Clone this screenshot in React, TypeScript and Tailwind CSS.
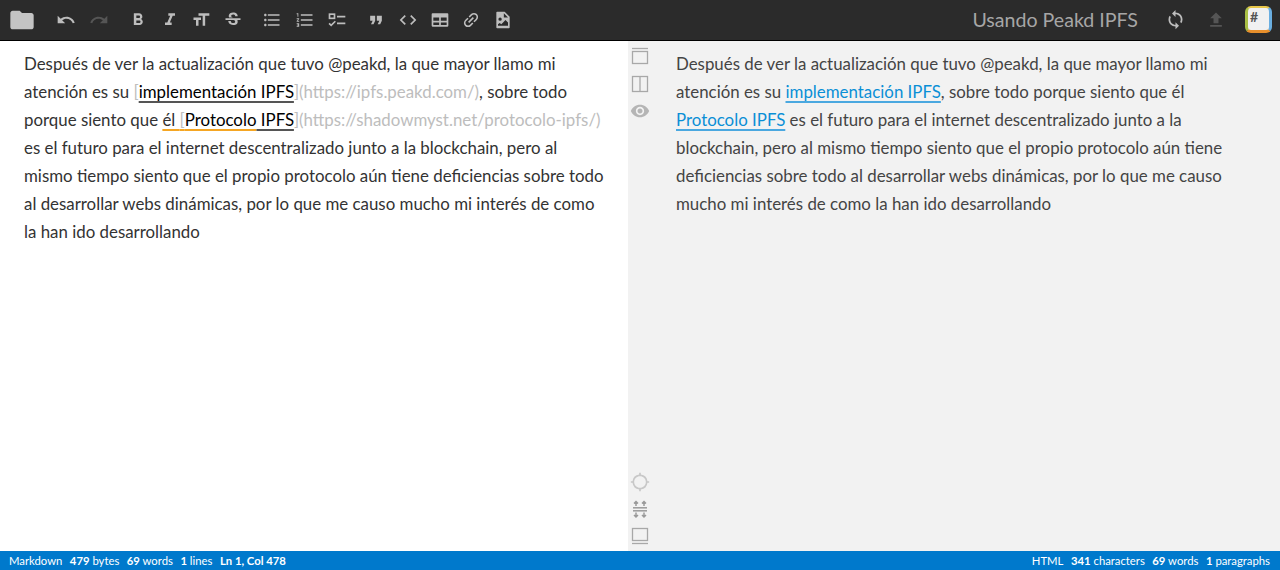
import type { ReactNode } from 'react';
import {
  MdFolder, MdUndo, MdRedo, MdFormatBold, MdFormatItalic, MdFormatSize, MdStrikethroughS,
  MdFormatListBulleted, MdFormatListNumbered, MdFormatQuote, MdCode,
  MdLink, MdSync, MdFileUpload, MdVisibility, MdGpsNotFixed,
} from 'react-icons/md';

const Grid = () => (
  <svg viewBox="0 0 24 24" width="20" height="20" fill="#bdbdbd">
    <path d="M3 4h18a1 1 0 0 1 1 1v14a1 1 0 0 1-1 1H3a1 1 0 0 1-1-1V5a1 1 0 0 1 1-1zm1 5v4h7V9H4zm9 0v4h7V9h-7zm-9 6v3h7v-3H4zm9 0v3h7v-3h-7z" />
  </svg>
);

const ImageFile = () => (
  <svg viewBox="0 0 24 24" width="20" height="20" fill="#bdbdbd">
    <path d="M5 2h9l6 6v13a1 1 0 0 1-1 1H5a1 1 0 0 1-1-1V3a1 1 0 0 1 1-1zm8 2v5h5l-5-5zM8.500 9a2 2 0 1 0 0 4 2 2 0 0 0 0-4zM6 19h12v-4l-3-3-5 5-2-1.500L6 17v2z" fillRule="evenodd" />
  </svg>
);

// small box over a tick, each followed by a line
const TaskList = () => (
  <svg viewBox="0 0 24 24" width="20" height="20" fill="none" stroke="#bdbdbd" strokeWidth="2">
    <rect x="3" y="5" width="6" height="5" />
    <path d="M2.500 16l2.500 2.500L10 13.500" />
    <path d="M12 8h10M12 16h10" />
  </svg>
);

const PaneTop = () => (
  <svg viewBox="0 0 20 20" width="20" height="20" fill="none" stroke="#a8a8a8" strokeWidth="1.300">
    <path d="M2 2.500h16" />
    <rect x="2.500" y="5.500" width="15" height="12" />
  </svg>
);

const PaneSplit = () => (
  <svg viewBox="0 0 20 20" width="20" height="20" fill="none" stroke="#a8a8a8" strokeWidth="1.300">
    <rect x="2.500" y="2.500" width="15" height="15" />
    <path d="M10 2.500v15" />
  </svg>
);

const PaneBottom = () => (
  <svg viewBox="0 0 20 20" width="20" height="20" fill="none" stroke="#a8a8a8" strokeWidth="1.300">
    <rect x="2.500" y="2.500" width="15" height="12" />
    <path d="M2 17.500h16" />
  </svg>
);

const ScrollSync = () => (
  <svg viewBox="0 0 20 20" width="20" height="20" fill="none" stroke="#9a9a9a" strokeWidth="1.500">
    <path d="M3 8.800h14" />
    <path d="M3 11.800h14" />
    <path d="M6 7V2.500M4 4.500l2-2 2 2M14 7V2.500M12 4.500l2-2 2 2" />
    <path d="M6 13.500v4.500M4 16l2 2 2-2M14 13.500v4.500M12 16l2 2 2-2" />
  </svg>
);

const Logo = () => (
  <div className="w-[27px] h-[27px] rounded-md bg-[#f1f1f1] border-[3px] border-t-2 border-t-[#e8c74a] border-l-[#a9bf45] border-r-[#6aaee0] border-b-[#e8902c] pl-[2px] text-[#555] text-[14px] font-bold leading-[17px]">
    #
  </div>
);

const Tool = ({ children }: { children: ReactNode }) => (
  <span className="flex items-center justify-center w-5 h-5">{children}</span>
);

const Status = ({ n, label }: { n: string; label: string }) => (
  <span>
    <b className="font-bold">{n}</b> {label}
  </span>
);

const A = ({ children }: { children: ReactNode }) => (
  <span className="text-black underline decoration-2 decoration-[#555] underline-offset-[3px]">{children}</span>
);

const Url = ({ children }: { children: ReactNode }) => <span className="text-[#bdbdbd]">{children}</span>;

const Link = ({ children }: { children: ReactNode }) => (
  <span className="text-[#0a8fd6] underline decoration-2 decoration-[#4aa8e0] underline-offset-[3px]">{children}</span>
);

export default function App() {
  const ic = { size: 20, color: '#bdbdbd' };

  return (
    <div className="w-[1280px] h-[570px] flex flex-col overflow-hidden bg-white font-['Lato',sans-serif]">
      <header className="h-[41px] shrink-0 bg-[#2b2b2b] border-b border-black flex items-center">
        <MdFolder size={28} color="#c4c4c4" className="ml-[8px] mr-[20px]" />
        <div className="flex items-center gap-[13px]">
          <Tool><MdUndo size={22} color="#bdbdbd" /></Tool>
          <Tool><MdRedo size={22} color="#555" /></Tool>
        </div>
        <div className="flex items-center gap-[11.500px] ml-[19px]">
          <Tool><MdFormatBold size={26} color="#bdbdbd" /></Tool>
          <Tool><MdFormatItalic size={26} color="#bdbdbd" /></Tool>
          <Tool><MdFormatSize size={24} color="#bdbdbd" /></Tool>
          <Tool><MdStrikethroughS size={22} color="#bdbdbd" /></Tool>
        </div>
        <div className="flex items-center gap-[12.500px] ml-[19.500px]">
          <Tool><MdFormatListBulleted {...ic} /></Tool>
          <Tool><MdFormatListNumbered {...ic} /></Tool>
          <Tool><TaskList /></Tool>
        </div>
        <div className="flex items-center gap-[11.750px] ml-[19px]">
          <Tool><MdFormatQuote size={24} color="#bdbdbd" /></Tool>
          <Tool><MdCode size={24} color="#bdbdbd" /></Tool>
          <Tool><Grid /></Tool>
          <Tool><MdLink size={22} color="#bdbdbd" className="-rotate-45" /></Tool>
          <Tool><ImageFile /></Tool>
        </div>
        <div className="ml-auto flex items-center">
          <span className="text-[19.600px] text-[#a6a6a6]">Usando Peakd IPFS</span>
          <MdSync size={21} color="#bdbdbd" className="ml-[27px]" />
          <MdFileUpload size={20} color="#555" className="ml-[20px]" />
          <div className="ml-[19px] mr-[8px]"><Logo /></div>
        </div>
      </header>

      <main className="flex-1 min-h-0 flex">
        <section className="w-[628px] shrink-0 px-6 pt-[9px] text-[16.880px] leading-[28px] text-[#333]">
          Después de ver la actualización que tuvo @peakd, la que mayor llamo mi atención es su{' '}
          <Url>[</Url><A>implementación IPFS</A><Url>](https://ipfs.peakd.com/)</Url>, sobre todo porque siento que{' '}
          <span className="underline decoration-2 decoration-[#f5a623] underline-offset-[3px]">él <Url>[</Url><span className="text-black">Protocolo</span></span>
          <A>&nbsp;IPFS</A>
          <Url>](https://shadowmyst.net/protocolo-ipfs/)</Url> es el futuro para el internet descentralizado junto a la blockchain, pero al mismo tiempo siento que el propio protocolo aún tiene deficiencias sobre todo al desarrollar webs dinámicas, por lo que me causo mucho mi interés de como la han ido desarrollando
        </section>

        <section className="flex-1 bg-[#f2f2f2] flex">
          <nav className="w-6 flex flex-col items-center pt-[5px] pb-[5px] shrink-0">
            <div className="flex flex-col gap-[7.500px]">
              <PaneTop />
              <PaneSplit />
              <MdVisibility size={20} color="#b5b5b5" />
            </div>
            <div className="mt-auto flex flex-col gap-[7px]">
              <MdGpsNotFixed size={20} color="#c8c8c8" />
              <ScrollSync />
              <PaneBottom />
            </div>
          </nav>
          <article className="flex-1 pl-6 pr-10 pt-[9px] text-[16.880px] leading-[28px] text-[#444]">
            Después de ver la actualización que tuvo @peakd, la que mayor llamo mi atención es su <Link>implementación IPFS</Link>, sobre todo porque siento que él <Link>Protocolo IPFS</Link> es el futuro para el internet descentralizado junto a la blockchain, pero al mismo tiempo siento que el propio protocolo aún tiene deficiencias sobre todo al desarrollar webs dinámicas, por lo que me causo mucho mi interés de como la han ido desarrollando
          </article>
        </section>
      </main>

      <footer className="h-[19px] shrink-0 bg-[#0079cc] text-white text-[11.300px] leading-[19px] flex items-center justify-between pl-[9px] pr-[10px]">
        <div className="flex gap-[7.500px]">
          <span>Markdown</span>
          <Status n="479" label="bytes" />
          <Status n="69" label="words" />
          <Status n="1" label="lines" />
          <b className="font-bold">Ln 1, Col 478</b>
        </div>
        <div className="flex gap-[7.500px]">
          <span>HTML</span>
          <Status n="341" label="characters" />
          <Status n="69" label="words" />
          <Status n="1" label="paragraphs" />
        </div>
      </footer>
    </div>
  );
}
